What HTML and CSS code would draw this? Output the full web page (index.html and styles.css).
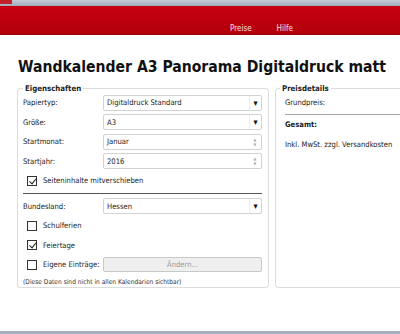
FILE: index.html
```html
<!DOCTYPE html>
<html lang="de">
<head>
<meta charset="utf-8">
<title>Wandkalender</title>
<link rel="stylesheet" href="styles.css">
</head>
<body>
<div class="chrome"><span class="chrome-tab"></span></div>
<nav class="nav">
  <a class="nav-link">Preise</a>
  <a class="nav-link">Hilfe</a>
</nav>
<main class="main">
  <h1 class="title">Wandkalender A3 Panorama Digitaldruck matt</h1>
  <div class="panels">
    <fieldset class="box box-left">
      <legend class="legend">Eigenschaften</legend>
      <div class="form">
        <label class="lbl">Papiertyp:</label>
        <div class="ctl select"><span>Digitaldruck Standard</span><span class="drop">▾</span></div>
        <label class="lbl">Größe:</label>
        <div class="ctl select"><span>A3</span><span class="drop">▾</span></div>
        <label class="lbl">Startmonat:</label>
        <div class="ctl spin"><span>Januar</span><span class="arrows"><i>▲</i><i>▼</i></span></div>
        <label class="lbl">Startjahr:</label>
        <div class="ctl spin"><span>2016</span><span class="arrows"><i>▲</i><i>▼</i></span></div>
        <div class="check full"><span class="cb on"></span>Seiteninhalte mitverschieben</div>
        <hr class="sep full">
        <label class="lbl">Bundesland:</label>
        <div class="ctl select"><span>Hessen</span><span class="drop">▾</span></div>
        <div class="check full"><span class="cb"></span>Schulferien</div>
        <div class="check full"><span class="cb on"></span>Feiertage</div>
        <div class="check"><span class="cb"></span>Eigene Einträge:</div>
        <div class="ctl button">Ändern...</div>
        <p class="note full">(Diese Daten sind nicht in allen Kalendarien sichtbar)</p>
      </div>
    </fieldset>
    <fieldset class="box box-right">
      <legend class="legend">Preisdetails</legend>
      <div class="price">
        <div class="price-row r1">Grundpreis:</div>
        <div class="price-sep"></div>
        <div class="price-row r2 bold">Gesamt:</div>
        <div class="price-row r3">Inkl. MwSt. zzgl. Versandkosten</div>
      </div>
    </fieldset>
  </div>
</main>
<div class="chrome-bottom"></div>
</body>
</html>
```
FILE: styles.css
```css
* { box-sizing: border-box; }
html, body { margin: 0; padding: 0; }
body {
  width: 400px;
  height: 334px;
  overflow: hidden;
  background: #ffffff;
  font-family: "DejaVu Sans Condensed", "DejaVu Sans", sans-serif;
  font-size: 7.6px;
  color: #1a1a1a;
  display: flex;
  flex-direction: column;
}
.chrome {
  height: 6px;
  background: linear-gradient(#c3ccd6, #9eabba);
  flex: none;
}
.chrome-tab {
  display: block;
  width: 12px;
  height: 4px;
  background: #c4202a;
}
.nav {
  height: 29px;
  flex: none;
  background: linear-gradient(#c70010, #b3000c);
  border-bottom: 1px solid #9a0008;
  display: flex;
  align-items: center;
  gap: 25px;
  padding: 16px 0 0 230px;
}
.nav-link {
  color: #f4e4e4;
  font-size: 8px;
}
.main {
  flex: 1;
  padding: 22px 0 0 17px;
}
.title {
  margin: 0 0 7px 1px;
  font-size: 15.6px;
  font-weight: bold;
  line-height: 20px;
  color: #111;
  white-space: nowrap;
}
.panels {
  display: flex;
  gap: 6px;
}
.box {
  margin: 0;
  border: 1px solid #dcdcdc;
  border-radius: 3px;
  height: 204px;
  padding: 0 5px;
}
.box-left { width: 252px; flex: none; }
.box-right { width: 200px; flex: none; padding: 0 4px; }
.legend {
  padding: 0 2px;
  font-weight: bold;
  font-size: 7.8px;
  color: #222;
  line-height: 9px;
}
.form {
  display: grid;
  grid-template-columns: 80px 159px;
  grid-template-rows: repeat(5, 19.5px) 6px repeat(4, 19.5px) 14px;
  align-items: center;
}
.full { grid-column: 1 / 3; }
.ctl {
  height: 16px;
  border: 1px solid #d2d2d2;
  border-radius: 2px;
  background: #fff;
  display: flex;
  align-items: center;
  justify-content: space-between;
  padding-left: 3px;
}
.drop {
  width: 12px;
  height: 100%;
  display: flex;
  align-items: center;
  justify-content: center;
  font-size: 9px;
  color: #111;
  border-left: 1px solid #ececec;
}
.arrows {
  width: 12px;
  display: flex;
  flex-direction: column;
  align-items: center;
  font-size: 4px;
  line-height: 5px;
  color: #a8a8a8;
}
.arrows i { font-style: normal; }
.check {
  display: flex;
  align-items: center;
  gap: 6px;
  padding-left: 4px;
}
.cb {
  width: 10px;
  height: 10px;
  border: 1px solid #333;
  background: #fff;
  position: relative;
  flex: none;
}
.cb.on::after {
  content: "";
  position: absolute;
  left: 2.5px;
  top: 0px;
  width: 3px;
  height: 5.5px;
  border: solid #1a1a1a;
  border-width: 0 1.8px 1.8px 0;
  transform: rotate(40deg);
}
.sep {
  margin: 0;
  border: 0;
  border-top: 1px solid #555;
  height: 0;
}
.button {
  justify-content: center;
  background: #efefef;
  border-color: #c8c8c8;
  color: #9a9a9a;
  height: 15px;
  padding-left: 0;
}
.note {
  margin: 0;
  font-size: 6.6px;
  color: #333;
  white-space: nowrap;
}
.price {
  padding-left: 5px;
}
.price-row {
  display: flex;
  align-items: center;
}
.r1 { height: 19.5px; }
.r2 { height: 19px; }
.r3 { height: 20px; }
.price-sep {
  border-top: 1px solid #aaa;
  margin-top: 1.5px;
}
.bold { font-weight: bold; }
.chrome-bottom {
  height: 3px;
  flex: none;
  background: #a7b1bd;
}
```
